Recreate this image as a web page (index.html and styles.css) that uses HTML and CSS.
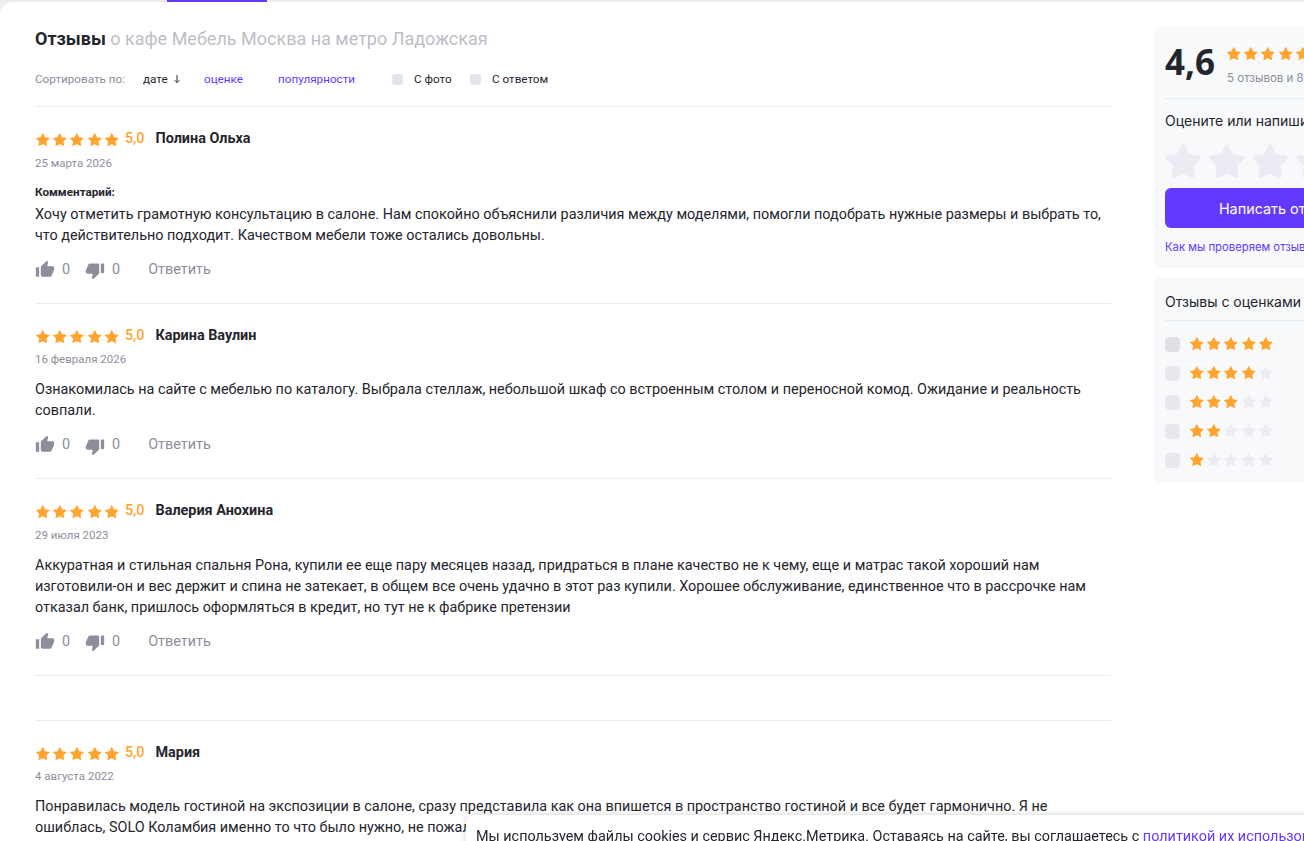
FILE: index.html
```html
<!DOCTYPE html>
<html lang="ru">

<head>
    <meta charset="UTF-8">
    <meta name="viewport" content="width=device-width, initial-scale=1.0">
    <title>Отзывы</title>
    <link rel="stylesheet" href="styles.css">
</head>

<body>
    <svg class="sprite" xmlns="http://www.w3.org/2000/svg">
        <symbol id="star" viewBox="0 0 24 24">
            <path d="M12 1.300L15.530 7.950 22.940 9.250 17.710 14.650 18.760 22.100 12 18.800 5.240 22.100 6.290 14.650 1.060 9.250 8.470 7.950z" />
        </symbol>
        <symbol id="star-big" viewBox="0 0 36 36">
            <path d="M16 2.6c.9-1.8 3.1-1.8 4 0l3.7 7.6c.3.6.9 1 1.6 1.1l8.3 1.2c1.9.3 2.6 2.5 1.3 3.8l-6 5.9c-.5.5-.7 1.200-.6 1.900l1.400 8.300c.3 1.900-1.600 3.300-3.300 2.400l-7.400-3.900c-.6-.3-1.300-.3-1.900 0l-7.400 3.900c-1.700.9-3.600-.5-3.300-2.400l1.400-8.300c.1-.7-.1-1.400-.6-1.900l-6-5.900c-1.300-1.300-.6-3.500 1.300-3.800l8.300-1.200c.7-.1 1.300-.5 1.600-1.100z" />
        </symbol>
        <symbol id="thumb-up" viewBox="0 0 24 24" preserveAspectRatio="none">
            <path d="M1 21h4V9H1v12zm22-11c0-1.100-.9-2-2-2h-6.310l.95-4.570.03-.32c0-.41-.17-.79-.44-1.060L14.170 1 7.590 7.590C7.220 7.950 7 8.450 7 9v10c0 1.100.9 2 2 2h9c.83 0 1.540-.5 1.840-1.220l3.020-7.050c.09-.23.14-.47.14-.73v-2z" />
        </symbol>
        <symbol id="thumb-down" viewBox="0 0 24 24" preserveAspectRatio="none">
            <path d="M15 3H6c-.83 0-1.540.5-1.840 1.220l-3.020 7.050c-.09.23-.14.47-.14.73v2c0 1.100.9 2 2 2h6.310l-.95 4.570-.03.32c0 .41.17.79.44 1.060L9.830 23l6.590-6.590c.36-.36.58-.86.58-1.410V5c0-1.100-.9-2-2-2zm4 0v12h4V3h-4z" />
        </symbol>
    </svg>

    <div class="topbar">
        <div class="topbar-tab"></div>
    </div>

    <div class="page">
        <main class="reviews">
            <h1 class="reviews-title"><b>Отзывы</b> о кафе Мебель Москва на метро Ладожская</h1>

            <div class="sort-row">
                <span class="sort-label">Сортировать по:</span>
                <span class="sort-current">дате
                    <svg class="sort-arrow" viewBox="0 0 10 12"><path d="M5 1v9.500M2 7.500l3 3 3-3" /></svg>
                </span>
                <a class="sort-link sort-link-rating">оценке</a>
                <a class="sort-link sort-link-popular">популярности</a>
                <span class="sort-check sort-check-photo"><i></i>С фото</span>
                <span class="sort-check"><i></i>С ответом</span>
            </div>

            <article class="review review-first">
                <div class="review-head">
                    <span class="stars">
                        <svg><use href="#star" /></svg><svg><use href="#star" /></svg><svg><use href="#star" /></svg><svg><use href="#star" /></svg><svg><use href="#star" /></svg>
                    </span>
                    <span class="score">5,0</span>
                    <span class="author">Полина Ольха</span>
                </div>
                <div class="review-date">25 марта 2026</div>
                <div class="review-caption">Комментарий:</div>
                <p class="review-text review-text-caption">Хочу отметить грамотную консультацию в салоне. Нам спокойно объяснили различия между моделями, помогли подобрать нужные размеры и выбрать то, что действительно подходит. Качеством мебели тоже остались довольны.</p>
                <div class="review-actions">
                    <svg class="thumb"><use href="#thumb-up" /></svg><span class="count">0</span>
                    <svg class="thumb thumb-down"><use href="#thumb-down" /></svg><span class="count">0</span>
                    <a class="reply">Ответить</a>
                </div>
            </article>

            <article class="review">
                <div class="review-head">
                    <span class="stars">
                        <svg><use href="#star" /></svg><svg><use href="#star" /></svg><svg><use href="#star" /></svg><svg><use href="#star" /></svg><svg><use href="#star" /></svg>
                    </span>
                    <span class="score">5,0</span>
                    <span class="author">Карина Ваулин</span>
                </div>
                <div class="review-date">16 февраля 2026</div>
                <p class="review-text">Ознакомилась на сайте с мебелью по каталогу. Выбрала стеллаж, небольшой шкаф со встроенным столом и переносной комод. Ожидание и реальность совпали.</p>
                <div class="review-actions">
                    <svg class="thumb"><use href="#thumb-up" /></svg><span class="count">0</span>
                    <svg class="thumb thumb-down"><use href="#thumb-down" /></svg><span class="count">0</span>
                    <a class="reply">Ответить</a>
                </div>
            </article>

            <article class="review">
                <div class="review-head">
                    <span class="stars">
                        <svg><use href="#star" /></svg><svg><use href="#star" /></svg><svg><use href="#star" /></svg><svg><use href="#star" /></svg><svg><use href="#star" /></svg>
                    </span>
                    <span class="score">5,0</span>
                    <span class="author">Валерия Анохина</span>
                </div>
                <div class="review-date">29 июля 2023</div>
                <p class="review-text">Аккуратная и стильная спальня Рона, купили ее еще пару месяцев назад, придраться в плане качество не к чему, еще и матрас такой хороший нам изготовили-он и вес держит и спина не затекает, в общем все очень удачно в этот раз купили. Хорошее обслуживание, единственное что в рассрочке нам отказал банк, пришлось оформляться в кредит, но тут не к фабрике претензии</p>
                <div class="review-actions">
                    <svg class="thumb"><use href="#thumb-up" /></svg><span class="count">0</span>
                    <svg class="thumb thumb-down"><use href="#thumb-down" /></svg><span class="count">0</span>
                    <a class="reply">Ответить</a>
                </div>
            </article>

            <div class="reviews-gap"></div>

            <article class="review">
                <div class="review-head">
                    <span class="stars">
                        <svg><use href="#star" /></svg><svg><use href="#star" /></svg><svg><use href="#star" /></svg><svg><use href="#star" /></svg><svg><use href="#star" /></svg>
                    </span>
                    <span class="score">5,0</span>
                    <span class="author">Мария</span>
                </div>
                <div class="review-date">4 августа 2022</div>
                <p class="review-text">Понравилась модель гостиной на экспозиции в салоне, сразу представила как она впишется в пространство гостиной и все будет гармонично. Я не ошиблась, SOLO Коламбия именно то что было нужно, не пожалела о покупке.</p>
            </article>
        </main>

        <aside class="sidebar">
            <section class="panel panel-rating">
                <div class="rating-top">
                    <div class="rating-value">4,6</div>
                    <div class="rating-info">
                        <span class="stars stars-side stars-total">
                            <svg><use href="#star" /></svg><svg><use href="#star" /></svg><svg><use href="#star" /></svg><svg><use href="#star" /></svg><svg><use href="#star" /></svg>
                        </span>
                        <div class="rating-count">5 отзывов и 8 оценок</div>
                    </div>
                </div>
                <div class="panel-title panel-title-rate">Оцените или напишите отзыв</div>
                <div class="rate-stars">
                    <svg><use href="#star-big" /></svg><svg><use href="#star-big" /></svg><svg><use href="#star-big" /></svg><svg><use href="#star-big" /></svg><svg><use href="#star-big" /></svg>
                </div>
                <button class="write-btn" type="button">Написать отзыв</button>
                <a class="check-link">Как мы проверяем отзывы</a>
            </section>

            <section class="panel panel-filter">
                <div class="panel-title panel-title-filter">Отзывы с оценками</div>
                <div class="filter-row">
                    <i class="filter-box filter-box-active"></i>
                    <span class="stars stars-side">
                        <svg><use href="#star" /></svg><svg><use href="#star" /></svg><svg><use href="#star" /></svg><svg><use href="#star" /></svg><svg><use href="#star" /></svg>
                    </span>
                </div>
                <div class="filter-row">
                    <i class="filter-box"></i>
                    <span class="stars stars-side">
                        <svg><use href="#star" /></svg><svg><use href="#star" /></svg><svg><use href="#star" /></svg><svg><use href="#star" /></svg><svg class="off"><use href="#star" /></svg>
                    </span>
                </div>
                <div class="filter-row">
                    <i class="filter-box"></i>
                    <span class="stars stars-side">
                        <svg><use href="#star" /></svg><svg><use href="#star" /></svg><svg><use href="#star" /></svg><svg class="off"><use href="#star" /></svg><svg class="off"><use href="#star" /></svg>
                    </span>
                </div>
                <div class="filter-row">
                    <i class="filter-box"></i>
                    <span class="stars stars-side">
                        <svg><use href="#star" /></svg><svg><use href="#star" /></svg><svg class="off"><use href="#star" /></svg><svg class="off"><use href="#star" /></svg><svg class="off"><use href="#star" /></svg>
                    </span>
                </div>
                <div class="filter-row">
                    <i class="filter-box"></i>
                    <span class="stars stars-side">
                        <svg><use href="#star" /></svg><svg class="off"><use href="#star" /></svg><svg class="off"><use href="#star" /></svg><svg class="off"><use href="#star" /></svg><svg class="off"><use href="#star" /></svg>
                    </span>
                </div>
            </section>
        </aside>
    </div>

    <div class="cookie">Мы используем файлы cookies и сервис Яндекс.Метрика. Оставаясь на сайте, вы соглашаетесь с <a>политикой их использования</a></div>
</body>

</html>
```

FILE: styles.css
```css
html,
body {
    height: 100%;
}

body {
    margin: 0;
    overflow: hidden;
    background-color: #f0f0f4;
    color: #25252d;
    font-family: Roboto, "Liberation Sans", sans-serif;
}

.sprite {
    display: none;
}

.topbar {
    height: 2px;
    background-color: #ebebf0;
}

.topbar-tab {
    width: 100px;
    height: 2px;
    margin-left: 167px;
    background-color: #6439ff;
}

.page {
    display: flex;
    width: 1500px;
    height: 900px;
    padding: 24px 0 0 35px;
    border-top-left-radius: 14px;
    background-color: #fff;
}

/* left column */

.reviews {
    width: 1076px;
    flex-shrink: 0;
}

.reviews-title {
    margin: 0;
    font-size: 18px;
    font-weight: 400;
    line-height: 26px;
    color: #bdbdc8;
}

.reviews-title b {
    font-weight: 700;
    color: #25252d;
}

.sort-row {
    display: flex;
    align-items: center;
    height: 18px;
    margin-top: 18px;
    padding-bottom: 18px;
    border-bottom: 1px solid #ebebf0;
    font-size: 11.7px;
}

.sort-row span,
.sort-row a {
    white-space: nowrap;
}

.sort-label {
    width: 108px;
    color: #8d8d9b;
}

.sort-current {
    display: flex;
    align-items: center;
    width: 61px;
}

.sort-arrow {
    width: 8px;
    height: 10px;
    margin-left: 5px;
    fill: none;
    stroke: #25252d;
    stroke-width: 1.2;
}

.sort-link {
    color: #6439ff;
}

.sort-link-rating {
    width: 74px;
}

.sort-link-popular {
    width: 114px;
}

.sort-check {
    display: flex;
    align-items: center;
}

.sort-check-photo {
    width: 78px;
}

.sort-check i {
    width: 11px;
    height: 11px;
    margin-right: 11px;
    border-radius: 3px;
    background-color: #e4e5ec;
}

.review {
    padding: 22.5px 0 23.5px;
    border-bottom: 1px solid #ebebf0;
}

.review:last-child {
    border-bottom: none;
}

.reviews-gap {
    height: 44px;
    border-bottom: 1px solid #ebebf0;
}

.review-head {
    display: flex;
    align-items: center;
    height: 18px;
}

.stars {
    display: flex;
    gap: 1.6px;
    padding-top: 2px;
}

.stars svg {
    width: 15.6px;
    height: 15.6px;
    fill: #ffa42e;
}

.stars svg.off {
    fill: #ebebf2;
}

.score {
    margin-left: 5.6px;
    font-size: 14.4px;
    font-weight: 500;
    color: #ffa42e;
}

.author {
    margin-left: 11px;
    font-size: 14.4px;
    font-weight: 700;
}

.review-date {
    margin-top: 7px;
    font-size: 11.5px;
    line-height: 16px;
    color: #8d8d9b;
}

.review-caption {
    margin-top: 13px;
    font-size: 11.7px;
    font-weight: 700;
    line-height: 16px;
}

.review-text {
    margin: 12px 0 0;
    font-size: 14.4px;
    line-height: 21px;
}

.review-text-caption {
    margin-top: 4.3px;
}

.review-actions {
    display: flex;
    align-items: center;
    height: 20px;
    margin-top: 13.5px;
    color: #8d8d9b;
    font-size: 14.4px;
}

.thumb {
    width: 20px;
    height: 19px;
    margin-right: 7px;
    fill: #8d8d9b;
}

.thumb-down {
    margin-top: 3px;
    margin-left: 15px;
}

.reply {
    margin-left: 28px;
}

/* right column */

.sidebar {
    width: 300px;
    margin-left: 42px;
    flex-shrink: 0;
    font-family: Inter, "Noto Sans", sans-serif;
}

.panel {
    margin-bottom: 9px;
    padding: 0 12px;
    border-radius: 8px;
    background-color: #f8f9fb;
}

.panel-rating {
    height: 242px;
}

.rating-top {
    display: flex;
    height: 72px;
    border-bottom: 1px solid #e6e8f2;
}

.rating-value {
    margin-top: 14px;
    font-family: "Noto Sans", sans-serif;
    font-size: 35px;
    font-weight: 700;
    line-height: 44px;
}

.rating-info {
    margin-left: 12px;
    padding-top: 20px;
}

.stars-total {
    margin-left: -1px;
}

.rating-count {
    margin-top: 9px;
    font-size: 11.5px;
    color: #8d8d9b;
    white-space: nowrap;
}

.panel-title {
    font-size: 14px;
    color: #25252d;
    white-space: nowrap;
}

.panel-title-rate {
    margin-top: 13px;
    line-height: 17px;
}

.rate-stars {
    display: flex;
    gap: 7.5px;
    margin-top: 14px;
}

.rate-stars svg {
    width: 36px;
    height: 36px;
    flex-shrink: 0;
    fill: #ebecf3;
}

.write-btn {
    display: block;
    width: 220px;
    height: 40px;
    margin-top: 9px;
    border: none;
    border-radius: 6px;
    background-color: #6439ff;
    color: #fff;
    font-family: Inter, "Noto Sans", sans-serif;
    font-size: 14.4px;
}

.check-link {
    display: block;
    margin-top: 12px;
    font-size: 11.3px;
    color: #6439ff;
    white-space: nowrap;
}

.panel-filter {
    height: 206px;
}

.panel-title-filter {
    height: 43px;
    line-height: 50px;
    border-bottom: 1px solid #e6e8f2;
    margin-bottom: 13px;
}

.filter-row {
    display: flex;
    align-items: center;
    height: 20px;
    margin-bottom: 9px;
}

.filter-box {
    width: 15px;
    height: 15px;
    margin-right: 9px;
    border-radius: 4px;
    background-color: #e8e9f0;
}

.filter-box-active {
    background-color: #dfe0e6;
}

.stars-side {
    padding-top: 0;
}

/* cookie notice */

.cookie {
    position: fixed;
    left: 466px;
    top: 815px;
    width: 900px;
    height: 40px;
    padding: 13px 10px;
    border-radius: 8px 0 0 0;
    background-color: #fff;
    box-shadow: 0 0 6px rgba(0, 0, 0, 0.2);
    font-size: 14.4px;
    line-height: 18px;
    white-space: nowrap;
}

.cookie a {
    color: #6439ff;
}
```
